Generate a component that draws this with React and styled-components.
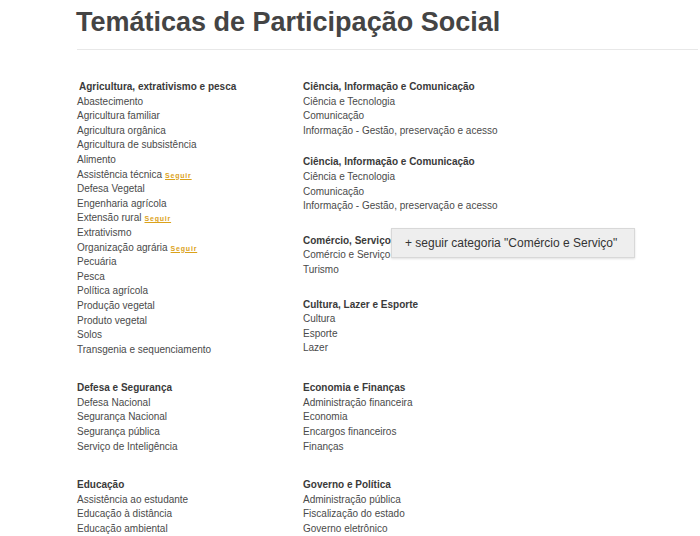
import styled, { createGlobalStyle } from "styled-components";

const GlobalStyle = createGlobalStyle`
  body {
    margin: 0;
    background: #fff;
    font-family: "Liberation Sans", Arial, sans-serif;
  }
`;

const left = [
  {
    title: "Agricultura, extrativismo e pesca",
    indent: true,
    items: [
      "Abastecimento",
      "Agricultura familiar",
      "Agricultura orgânica",
      "Agricultura de subsistência",
      "Alimento",
      ["Assistência técnica", true],
      "Defesa Vegetal",
      "Engenharia agrícola",
      ["Extensão rural", true],
      "Extrativismo",
      ["Organização agrária", true],
      "Pecuária",
      "Pesca",
      "Política agrícola",
      "Produção vegetal",
      "Produto vegetal",
      "Solos",
      "Transgenia e sequenciamento",
    ],
  },
];

const right = [
  {
    title: "Ciência, Informação e Comunicação",
    space: 17,
    items: ["Ciência e Tecnologia", "Comunicação", "Informação - Gestão, preservação e acesso"],
  },
  {
    title: "Ciência, Informação e Comunicação",
    space: 20,
    items: ["Ciência e Tecnologia", "Comunicação", "Informação - Gestão, preservação e acesso"],
  },
  {
    title: "Comércio, Serviços e Turismo",
    space: 20,
    tooltip: "Comércio e Serviço",
    items: ["Comércio e Serviço", "Turismo"],
  },
  {
    title: "Cultura, Lazer e Esporte",
    items: ["Cultura", "Esporte", "Lazer"],
  },
];

const rows = [
  {
    title: "Defesa e Segurança",
    items: ["Defesa Nacional", "Segurança Nacional", "Segurança pública", "Serviço de Inteligência"],
  },
  {
    title: "Economia e Finanças",
    items: ["Administração financeira", "Economia", "Encargos financeiros", "Finanças"],
  },
  {
    title: "Educação",
    items: ["Assistência ao estudante", "Educação à distância", "Educação ambiental"],
  },
  {
    title: "Governo e Política",
    items: ["Administração pública", "Fiscalização do estado", "Governo eletrônico"],
  },
];

const Group = ({ group }) => (
  <GroupBox $space={group.space}>
    <GroupTitle $indent={group.indent}>{group.title}</GroupTitle>
    {group.items.map((item, i) => {
      const [label, follow] = Array.isArray(item) ? item : [item, false];
      return (
        <Item key={i}>
          {label}
          {follow && <Follow href="#">Seguir</Follow>}
        </Item>
      );
    })}
    {group.tooltip && <Tooltip>+ seguir categoria "{group.tooltip}"</Tooltip>}
  </GroupBox>
);

const App = () => {
  return (
    <Page>
      <GlobalStyle />
      <Title>Temáticas de Participação Social</Title>
      <Divider />
      <Grid>
        <Column>
          {left.map((g, i) => (
            <Group key={i} group={g} />
          ))}
        </Column>
        <Column>
          {right.map((g, i) => (
            <Group key={i} group={g} />
          ))}
        </Column>
        {rows.map((g, i) => (
          <Group key={i} group={g} />
        ))}
      </Grid>
    </Page>
  );
};

export default App;

const Page = styled.div`
  padding: 6px 2px 0 77px;
`;

const Title = styled.h1`
  margin: 0 0 0 -1px;
  font-size: 27px;
  line-height: 32px;
  font-weight: bold;
  color: #444;
`;

const Divider = styled.hr`
  margin: 11px 0 0;
  border: 0;
  height: 1px;
  background: #e8e8e8;
`;

const Grid = styled.div`
  display: grid;
  grid-template-columns: 226px 226px;
  row-gap: 24px;
  margin-top: 30px;
`;

const Column = styled.div`
  display: flex;
  flex-direction: column;
`;

const GroupBox = styled.div`
  position: relative;
  margin-bottom: ${(p) => p.$space || 0}px;
  font-size: 10px;
  line-height: 14.6px;
`;

const GroupTitle = styled.div`
  font-weight: bold;
  color: #3a3a3a;
  padding-left: ${(p) => (p.$indent ? 2 : 0)}px;
  white-space: nowrap;
`;

const Item = styled.div`
  color: #4a4a4a;
  white-space: nowrap;
`;

const Follow = styled.a`
  margin-left: 3px;
  font-size: 7px;
  line-height: 1;
  font-weight: bold;
  letter-spacing: 0.8px;
  color: #dba21a;
  text-decoration: underline;
`;

const Tooltip = styled.div`
  position: absolute;
  left: 88px;
  top: -6px;
  width: 216px;
  height: 28px;
  padding: 0 13px;
  line-height: 28px;
  font-size: 12px;
  color: #333;
  white-space: nowrap;
  background: #eeeeee;
  border: 1px solid #d8d8d8;
  box-shadow: 0 1px 2px rgba(0, 0, 0, 0.12);
`;
